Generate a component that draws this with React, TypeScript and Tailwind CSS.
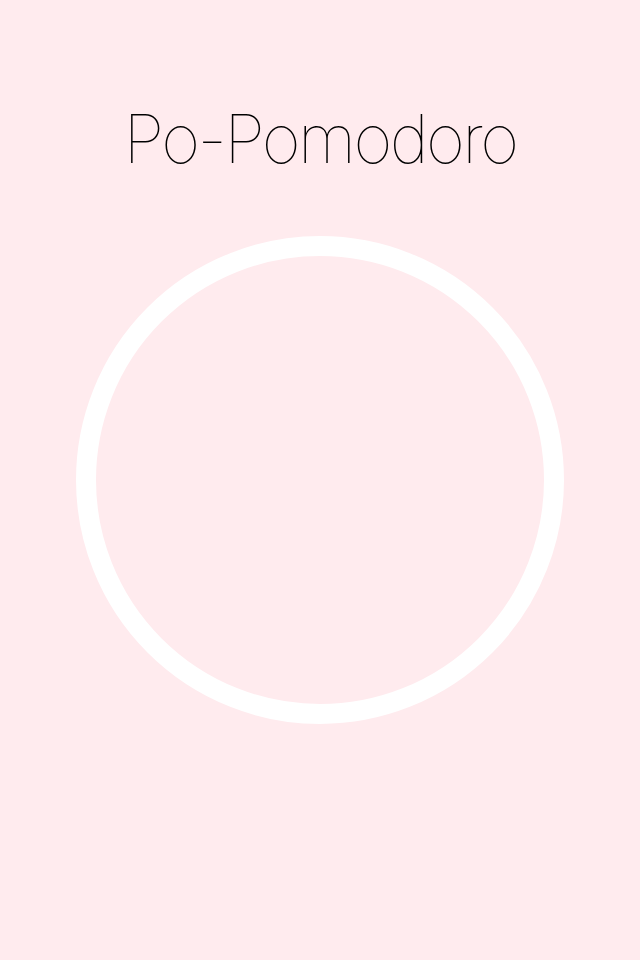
import React from "react";

const App: React.FC = () => {
  return (
    <div className="min-h-screen w-full bg-[#ffebee] flex flex-col items-center">
      {/* Title */}
      <h1
        className="mt-[99px] text-[67px] leading-[80px] font-thin text-black tracking-[-2.6px]"
        style={{ fontFamily: '"Inter", "Lato", "Liberation Sans", sans-serif' }}
      >
        Po-Pomodoro
      </h1>

      {/* Timer ring */}
      <div className="mt-[57px] w-[488px] h-[488px] rounded-full border-[20px] border-white" />
    </div>
  );
};

export default App;
